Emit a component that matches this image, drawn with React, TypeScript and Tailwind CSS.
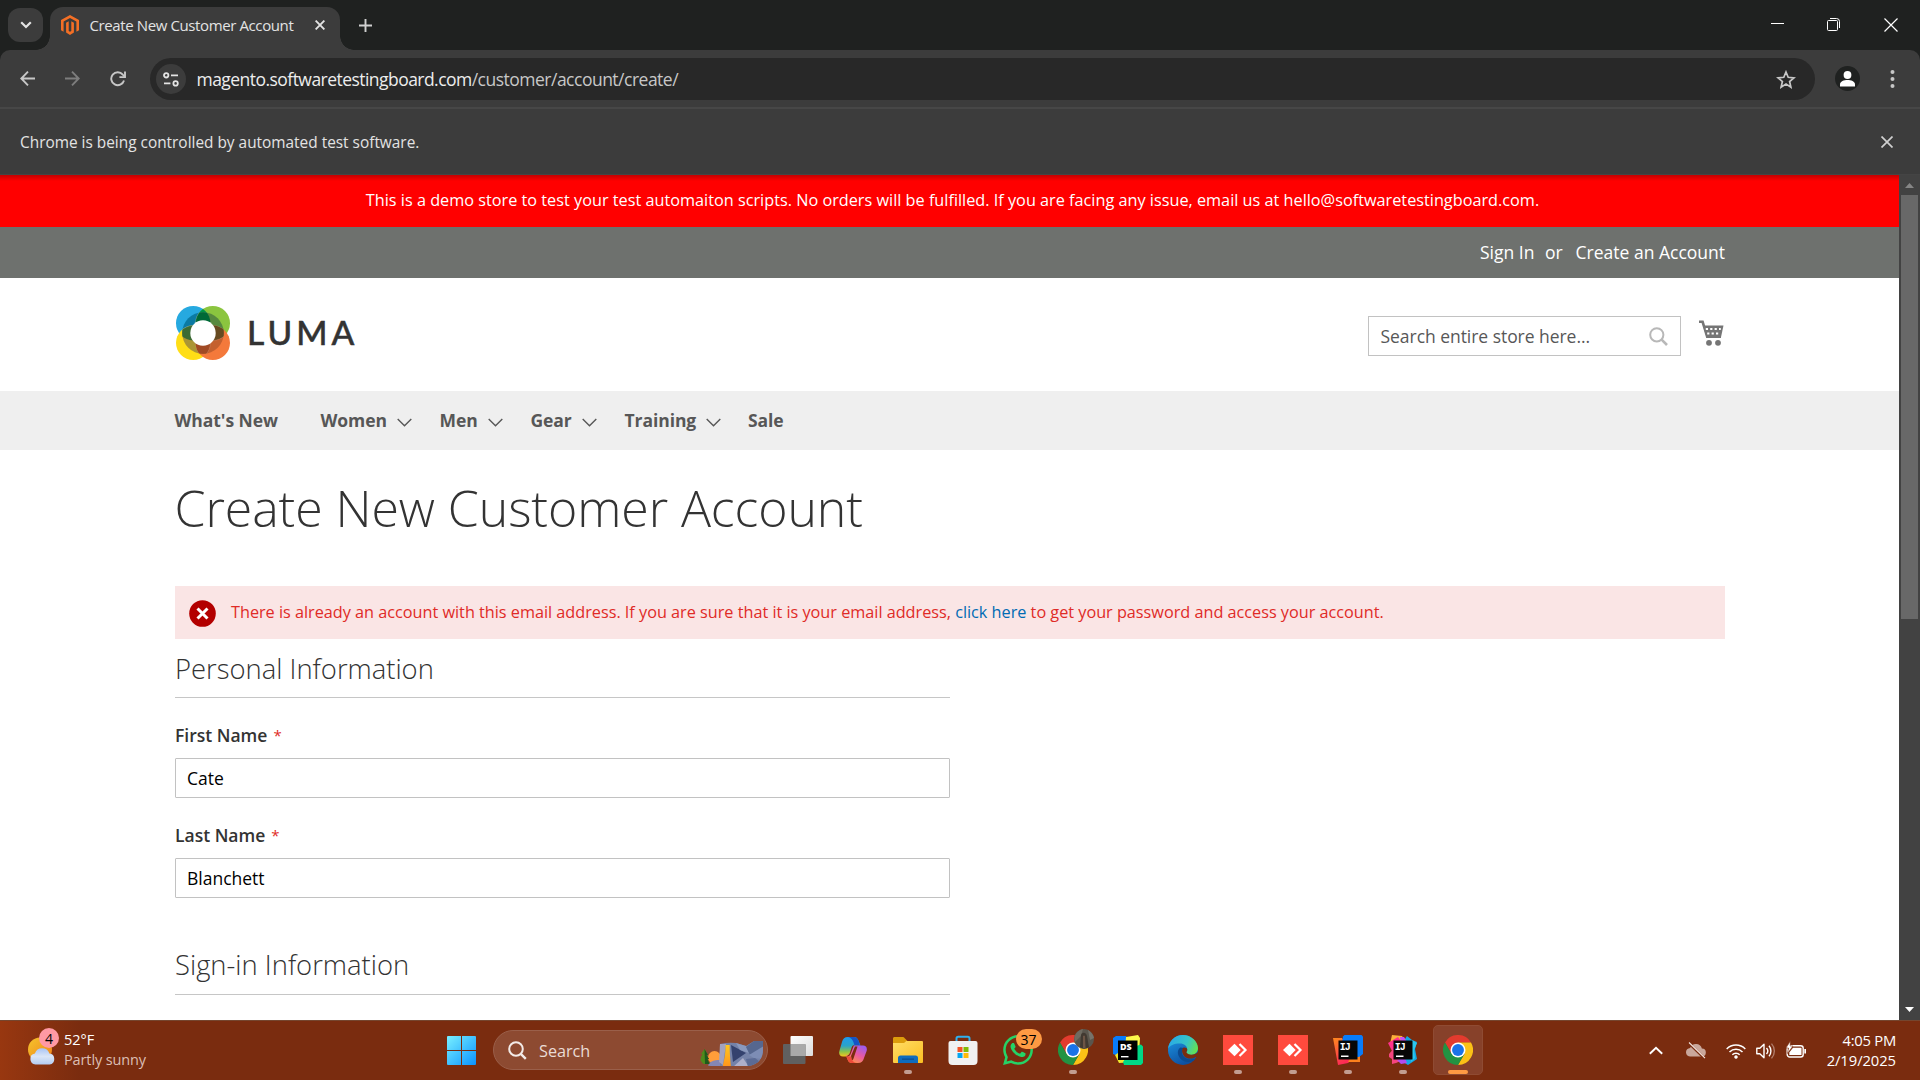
import React, { ReactNode } from "react";

/* ---------- Browser chrome ---------- */

function MagentoMark() {
  return (
    <svg width="18" height="20" viewBox="0 0 18 20" fill="#f46f25">
      <path d="M9 0 0 5.1v10.2l2.6 1.5V6.6L9 2.9l6.4 3.7v10.2l2.6-1.5V5.1z" />
      <path d="M10.3 15.9 9 16.7l-1.3-.8V6.3L5.1 7.8v9.8L9 20l3.9-2.4V7.8l-2.6-1.5z" />
    </svg>
  );
}

function TabStrip() {
  return (
    <div className="flex h-[50px] bg-[#1f2120]">
      <div className="ml-2 mt-2 flex h-[34px] w-[35px] items-center justify-center rounded-[12px] bg-[#3c3c3c]">
        <svg width="12" height="8" viewBox="0 0 12 8" fill="none" stroke="#e3e3e3" strokeWidth="2.2">
          <path d="M1.2 1.2 6 6l4.8-4.8" />
        </svg>
      </div>
      <div className="-ml-[7px] h-[14px] w-[14px] self-end bg-[radial-gradient(circle_at_0_0,transparent_13.5px,#3c3c3c_14px)]" />
      <div className="mt-[7px] flex h-[43px] w-[290px] items-center rounded-t-[13px] bg-[#3c3c3c] pb-[7px] pl-[11px]">
        <MagentoMark />
        <span className="ml-[10.5px] w-[215px] whitespace-nowrap text-[15px] tracking-[-0.39px] text-[#e3e3e3]">
          Create New Customer Account
        </span>
        <svg className="ml-[10.5px]" width="10" height="10" viewBox="0 0 10 10" stroke="#e3e3e3" strokeWidth="1.9">
          <path d="m.6.6 8.8 8.8M9.4.6.6 9.4" />
        </svg>
      </div>
      <div className="h-[14px] w-[14px] self-end bg-[radial-gradient(circle_at_100%_0,transparent_13.5px,#3c3c3c_14px)]" />
      <svg className="ml-[5px] mt-[19px]" width="13" height="13" viewBox="0 0 13 13" stroke="#d0d0d0" strokeWidth="1.9">
        <path d="M6.5 0v13M0 6.5h13" />
      </svg>
      <div className="ml-auto mr-[22px] flex gap-[43px] pt-[18px]">
        <svg width="13" height="13" viewBox="0 0 13 13" fill="#fff">
          <path d="M0 5h13v1H0z" />
        </svg>
        <svg width="14" height="14" viewBox="0 0 14 14" fill="none" stroke="#fff">
          <rect x=".5" y="2.5" width="10" height="10" rx="1" />
          <path d="M3 .5h6.5a3 3 0 0 1 3 3V10" />
        </svg>
        <svg width="14" height="14" viewBox="0 0 14 14" stroke="#fff" strokeWidth="1.2">
          <path d="m.5.5 13 13M13.5.5l-13 13" />
        </svg>
      </div>
    </div>
  );
}

function Toolbar() {
  return (
    <div className="bg-[#1f2120]">
      <div className="flex h-[57px] items-start rounded-t-[10px] bg-[#3c3c3c] pt-2">
        <div className="flex h-[42px] w-[150px] items-center">
          <svg className="ml-5 mt-[-1px]" width="15" height="15" viewBox="0 0 15 15" fill="none" stroke="#c7c7c7" strokeWidth="1.9">
            <path d="M15 7.5H1.5M8 .7 1.3 7.5 8 14.3" />
          </svg>
          <svg className="ml-[30px] mt-[-1px]" width="15" height="15" viewBox="0 0 15 15" fill="none" stroke="#7d7d7d" strokeWidth="1.9">
            <path d="M0 7.5h13.5M7 .7l6.7 6.8L7 14.3" />
          </svg>
          <svg className="ml-[29.5px] mt-[-1px]" width="16" height="16" viewBox="0 0 16 16" fill="none" stroke="#c7c7c7" strokeWidth="1.9">
            <path d="M14 9.5A6.5 6.5 0 1 1 12.8 3.6L15 5.8" />
            <path d="M15 .5v5.6H9.4" />
          </svg>
        </div>
        <div className="flex h-[42px] w-[1665px] items-center rounded-full bg-[#282828] pl-[6px] pr-[19.5px]">
          <div className="flex h-[30px] w-[30px] items-center justify-center rounded-full bg-[#3c3c3c]">
            <svg width="16" height="15" viewBox="0 0 16 15" fill="none" stroke="#e3e3e3" strokeWidth="1.8">
              <circle cx="3.2" cy="3.3" r="2.2" />
              <path d="M8 3.3h7M1 11.4h6.4" />
              <circle cx="12.6" cy="11.4" r="2.2" />
            </svg>
          </div>
          <div className="ml-[10.5px] whitespace-nowrap pt-px text-[17.5px] tracking-[-0.5px] text-[#c7c7c7]">
            <span className="tracking-[-0.54px] text-[#ededed]">magento.softwaretestingboard.com</span>/customer/account/create/
          </div>
          <svg className="ml-auto" width="20" height="19" viewBox="0 0 20 19" fill="none" stroke="#c7c7c7" strokeWidth="1.7">
            <path d="m10 2 2.2 5.3 5.7.5-4.3 3.7 1.3 5.6-4.9-3-4.9 3 1.3-5.6L2.1 7.8l5.7-.5z" />
          </svg>
        </div>
        <div className="ml-5 mt-2 flex h-[25px] w-[25px] items-center justify-center rounded-full bg-[#1f2120]">
          <svg width="15" height="16" viewBox="0 0 15 16" fill="#fff">
            <circle cx="7.5" cy="4" r="3.9" />
            <path d="M0 15.5v-2.2C0 10.5 4 9 7.5 9s7.5 1.5 7.5 4.3v2.2z" />
          </svg>
        </div>
        <svg className="ml-[30px] mt-[12px]" width="5" height="18" viewBox="0 0 5 18" fill="#c7c7c7">
          <circle cx="2.5" cy="2" r="2" />
          <circle cx="2.5" cy="9" r="2" />
          <circle cx="2.5" cy="16" r="2" />
        </svg>
      </div>
    </div>
  );
}

function InfoBar() {
  return (
    <div className="flex h-[68px] items-center justify-between border-b border-t-2 border-b-[#444] border-t-[#474747] bg-[#3c3c3c] pl-5 pr-[27px]">
      <span className="whitespace-nowrap pt-[2px] text-[15.4px] text-[#e3e3e3]">Chrome is being controlled by automated test software.</span>
      <svg width="12" height="12" viewBox="0 0 12 12" stroke="#d0d0d0" strokeWidth="1.7">
        <path d="m.5.5 11 11M11.5.5l-11 11" />
      </svg>
    </div>
  );
}

/* ---------- Store page ---------- */

function LumaLogo() {
  return (
    <svg width="54" height="54" viewBox="0 0 54 54">
      <defs>
        <clipPath id="tl"><circle cx="17.2" cy="17.2" r="17.2" /></clipPath>
        <clipPath id="br"><circle cx="36.8" cy="36.8" r="17.2" /></clipPath>
        <clipPath id="mid"><circle cx="27" cy="27" r="20.8" /></clipPath>
      </defs>
      <circle cx="17.2" cy="17.2" r="17.2" fill="#26a9e0" />
      <circle cx="36.8" cy="17.2" r="17.2" fill="#8bc53f" />
      <circle cx="17.2" cy="36.8" r="17.2" fill="#ffde16" />
      <circle cx="36.8" cy="36.8" r="17.2" fill="#f4793b" />
      <g clipPath="url(#tl)"><circle cx="36.8" cy="17.2" r="17.2" fill="#009345" /></g>
      <g clipPath="url(#mid)" stroke="#ffffff" strokeOpacity=".25" strokeWidth=".6">
        <circle cx="17.2" cy="17.2" r="17.2" fill="#0b7aa3" />
        <circle cx="36.8" cy="17.2" r="17.2" fill="#57893f" />
        <circle cx="17.2" cy="36.8" r="17.2" fill="#ab9535" />
        <circle cx="36.8" cy="36.8" r="17.2" fill="#c4602f" />
        <g clipPath="url(#tl)">
          <circle cx="36.8" cy="17.2" r="17.2" fill="#006937" />
          <circle cx="17.2" cy="36.8" r="17.2" fill="#3b6b33" />
        </g>
        <g clipPath="url(#br)">
          <circle cx="36.8" cy="17.2" r="17.2" fill="#664a20" />
          <circle cx="17.2" cy="36.8" r="17.2" fill="#a14a24" />
        </g>
      </g>
      <circle cx="27" cy="27" r="12.7" fill="#fff" />
    </svg>
  );
}

function CartIcon() {
  return (
    <svg width="26" height="27" viewBox="0 0 26 27">
      <path d="M1 1.8h3.6l4.6 15h13.6" fill="none" stroke="#757575" strokeWidth="2.6" />
      <path d="M5 5.5h20.500l-2.700 12.500H8.800z" fill="#757575" />
      <g stroke="#fff" strokeWidth="2" strokeDasharray="2.2 2.2">
        <path d="M7.8 9h15" />
        <path d="M9.2 13.500h13" />
      </g>
      <circle cx="11" cy="22.8" r="2.9" fill="#757575" />
      <circle cx="20" cy="22.8" r="2.9" fill="#757575" />
    </svg>
  );
}

function NavItem({ label, width, arrow }: { label: string; width: string; arrow?: boolean }) {
  return (
    <div className={`flex items-center ${width}`}>
      <span className="whitespace-nowrap tracking-[-0.07px]">{label}</span>
      {arrow && (
        <svg className="ml-[10px] mt-[3px]" width="15" height="9" viewBox="0 0 15 9" fill="none" stroke="#575757" strokeWidth="1.4">
          <path d="m.7.9 6.800 6.800L14.300.9" />
        </svg>
      )}
    </div>
  );
}

function Legend({ children }: { children: ReactNode }) {
  return <h2 className="h-[46px] border-b border-[#c6c6c6] text-[27.4px] font-light leading-[33px] text-[#333]">{children}</h2>;
}

function Field({ label, value }: { label: string; value: string }) {
  return (
    <div className="h-[100px]">
      <div className="flex h-[23px] items-center text-[17.5px] font-semibold text-[#333]">
        {label}
        <span className="ml-[6px] text-[15px] font-normal text-[#e02b27]">*</span>
      </div>
      <div className="mt-[11px] flex h-[40px] items-center rounded-[1px] border border-[#c2c2c2] bg-white px-[11px] text-[17.5px] text-black">
        {value}
      </div>
    </div>
  );
}

function StorePage() {
  return (
    <div className="h-[845px] w-[1899px] overflow-hidden bg-white">
      <div className="h-[52px] bg-[#ff0000] bg-[linear-gradient(#c40000,#ff0000_6px)] pl-[6px] text-center text-[16.25px] leading-[50px] text-white">
        This is a demo store to test your test automaiton scripts. No orders will be fulfilled. If you are facing any issue, email us at hello@softwaretestingboard.com.
      </div>
      <div className="flex h-[51px] items-center justify-end bg-[#6e716e] pr-[174px] text-[17.5px] text-white">
        <span>Sign In</span>
        <span className="ml-[10.5px]">or</span>
        <span className="ml-[13px]">Create an Account</span>
      </div>
      <div className="flex h-[113px] px-[175px]">
        <div className="ml-px mt-[28px]">
          <LumaLogo />
        </div>
        <div className="ml-[17px] mt-[27px] font-['Lato'] text-[33.5px] font-medium leading-[54px] tracking-[4px] text-[#333] [-webkit-text-stroke:0.5px_#333]">LUMA</div>
        <div className="ml-auto mt-[38px] flex h-[40px] w-[313px] items-center justify-between border border-[#c2c2c2] pl-[11.5px] pr-[12px] text-[17.5px] text-[#575757]">
          <span className="tracking-[-0.04px]">Search entire store here...</span>
          <svg width="19" height="19" viewBox="0 0 19 19" fill="none" stroke="#b8b8b8" strokeWidth="2">
            <circle cx="7.8" cy="7.8" r="6.6" />
            <path d="m12.6 12.6 5.4 5.4" strokeWidth="2.6" />
          </svg>
        </div>
        <div className="ml-[17px] mt-[42px]">
          <CartIcon />
        </div>
      </div>
      <div className="flex h-[59px] items-center bg-[#efefef] pl-[174.5px] text-[17.5px] font-bold text-[#575757]">
        <NavItem label="What's New" width="w-[146px]" />
        <NavItem label="Women" width="w-[119px]" arrow />
        <NavItem label="Men" width="w-[91px]" arrow />
        <NavItem label="Gear" width="w-[94px]" arrow />
        <NavItem label="Training" width="w-[123.5px]" arrow />
        <NavItem label="Sale" width="w-[60px]" />
      </div>
      <div className="px-[175px] pt-[31px]">
        <h1 className="-ml-[0.5px] text-[50px] font-light leading-[55px] tracking-[-0.09px] text-[#333]">Create New Customer Account</h1>
        <div className="mt-[50px] flex h-[53px] w-[1550px] items-center bg-[#fae5e5] pl-[14px] text-[16.25px] text-[#e02b27]">
          <svg width="27" height="27" viewBox="0 0 27 27" className="mt-[2px]">
            <circle cx="13.5" cy="13.5" r="13.3" fill="#b30000" />
            <path d="m8.5 8.5 10 10m0-10-10 10" stroke="#fff" strokeWidth="3" />
          </svg>
          <p className="ml-[15px] whitespace-nowrap tracking-[-0.015px]">
            There is already an account with this email address. If you are sure that it is your email address,{" "}
            <span className="text-[#006bb4]">click here</span> to get your password and access your account.
          </p>
        </div>
        <div className="w-[775px] pt-[13px]">
          <Legend>Personal Information</Legend>
          <div className="h-[242px] pt-[26px]">
            <Field label="First Name" value="Cate" />
            <Field label="Last Name" value="Blanchett" />
          </div>
          <div className="pt-[9px]">
            <Legend>
              <span className="block h-[45px] leading-[31px]">Sign-in Information</span>
            </Legend>
          </div>
        </div>
      </div>
    </div>
  );
}

function Scrollbar() {
  return (
    <div className="flex h-[845px] w-[21px] flex-col items-center bg-[#424242]">
      <svg className="mt-[8px]" width="9" height="5" viewBox="0 0 9 5" fill="#868686">
        <path d="M4.5 0 9 5H0z" />
      </svg>
      <div className="mt-[7px] h-[424px] w-[17px] bg-[#686868]" />
      <svg className="mb-[8px] mt-auto" width="9" height="5" viewBox="0 0 9 5" fill="#fff">
        <path d="M4.5 5 9 0H0z" />
      </svg>
    </div>
  );
}

/* ---------- Taskbar ---------- */

function Slot({ children, running }: { children: ReactNode; running?: boolean }) {
  return (
    <div className="flex h-[60px] w-[55px] flex-col items-center pt-[15px]">
      <div className="relative flex h-[30px] w-[30px] items-center justify-center">{children}</div>
      {running && <div className="mt-[5px] h-[4px] w-[8px] rounded-full bg-[#c39d90]" />}
    </div>
  );
}

function WeatherIcon() {
  return (
    <svg width="28" height="28" viewBox="0 0 28 28">
      <defs>
        <linearGradient id="sun" x1="0" y1="0" x2="1" y2="1">
          <stop offset="0" stopColor="#f5c52c" />
          <stop offset="1" stopColor="#f0801a" />
        </linearGradient>
        <linearGradient id="cloud" x1="0" y1="0" x2="0" y2="1">
          <stop offset="0" stopColor="#a9c4f5" />
          <stop offset=".5" stopColor="#dbe6f7" />
          <stop offset="1" stopColor="#b3cbf2" />
        </linearGradient>
      </defs>
      <circle cx="12" cy="12.5" r="12" fill="url(#sun)" />
      <path d="M7.500 27.500a5.500 5.500 0 0 1-.6-10.900 7.600 7.600 0 0 1 14.500 0 5.500 5.500 0 0 1 .2 10.900z" fill="url(#cloud)" />
    </svg>
  );
}

function WindowsIcon() {
  return (
    <svg width="29" height="29" viewBox="0 0 29 29">
      <defs>
        <linearGradient id="win" gradientUnits="userSpaceOnUse" x1="0" y1="0" x2="29" y2="29">
          <stop offset="0" stopColor="#79f0ff" />
          <stop offset="1" stopColor="#0a92ff" />
        </linearGradient>
      </defs>
      <path fill="url(#win)" d="M1 0h13v14H0V1a1 1 0 0 1 1-1zM15 0h13a1 1 0 0 1 1 1v13H15zM0 15h14v14H1a1 1 0 0 1-1-1zM15 15h14v13a1 1 0 0 1-1 1H15z" />
    </svg>
  );
}

function SearchArt() {
  return (
    <svg className="shrink-0" width="64" height="26" viewBox="0 0 64 26">
      <defs>
        <clipPath id="artclip"><path d="M0 0h63v8c0 10-5 16-15 17H11C4 25 0 21 0 16z" /></clipPath>
        <linearGradient id="fall" x1="0" y1="0" x2="0" y2="1">
          <stop offset="0" stopColor="#ffc71f" />
          <stop offset="1" stopColor="#ff941a" />
        </linearGradient>
      </defs>
      <g clipPath="url(#artclip)">
        <circle cx="14.500" cy="16.500" r="6.500" fill="#ff9d3a" />
        <path d="M8 26c0-5 5-7 12-7l4 8z" fill="#8587b3" />
        <path d="M4.500 8 8 14H6.500L9 18H7.500l2 5H0v-5h1.500L.5 17 2.500 13H1z" fill="#4f8a1b" />
        <path d="M4.500 8 8 14H6.500L9 18H7.500l2 5H5z" fill="#1f5a1c" />
        <path d="M20 3q8-2 16-1l10 3 8-5q6-2 10-1v27H20z" fill="#7482a8" />
        <path d="m20 3 6 0-3 21-4-3z" fill="#a3a3bf" />
        <path d="m31 4 15 8-13 9z" fill="#34426e" />
        <path d="m36 2 10 3 3 7-9-3z" fill="#8a99bd" />
        <path d="m54 0 10-2v8L50 14l-4-8z" fill="#56678f" />
        <path d="M64 5v13l-10-1-5-3z" fill="#7d8db5" />
        <path d="m33 26 10-9 6 9z" fill="#aeb0ca" />
        <path d="m46 18 9-1 5 4-12 5z" fill="#5b6b95" />
        <path d="M25.500 4h4.200c0 7 .3 12 1.300 22h-8.500c2-8 3-13 3-22z" fill="url(#fall)" />
      </g>
    </svg>
  );
}

function TaskViewIcon() {
  return (
    <svg width="30" height="28" viewBox="0 0 30 28">
      <defs>
        <linearGradient id="tvw" x1="0" y1="0" x2="1" y2="1">
          <stop offset="0" stopColor="#fff" />
          <stop offset="1" stopColor="#dcdcdc" />
        </linearGradient>
      </defs>
      <rect x="7.5" y="0" width="22.5" height="20" rx="1" fill="url(#tvw)" />
      <rect x="0" y="8" width="22.5" height="20" rx="1" fill="#606060" />
      <path d="M7.500 8h15v12h-15z" fill="#a9a9a9" />
    </svg>
  );
}

function CopilotIcon() {
  return (
    <svg width="28" height="26" viewBox="0 0 28 26">
      <defs>
        <linearGradient id="cpa" x1="0" y1="0" x2="0" y2="1">
          <stop offset="0" stopColor="#1d9bf0" />
          <stop offset=".45" stopColor="#2aa3c9" />
          <stop offset=".75" stopColor="#8bc34a" />
          <stop offset="1" stopColor="#f3c51d" />
        </linearGradient>
        <linearGradient id="cpb" x1=".8" y1="0" x2=".2" y2="1">
          <stop offset="0" stopColor="#9a5cf2" />
          <stop offset=".5" stopColor="#ea5aa0" />
          <stop offset="1" stopColor="#ff9a3c" />
        </linearGradient>
      </defs>
      <path d="M15 0c3 0 4 2 5 5l1.500 3.500H16c-2 0-3 1-3.600 3l-1.600 5c-.7 2-1.600 3-3.800 3H4c-3 0-4.500-2-3.600-5.500L3 5C4 1.700 5.500 0 9 0z" fill="url(#cpa)" />
      <path d="M9 0h6c3 0 4 2 5 5l1 3.500h-5.500c-1-3.500-2-7.500-6.500-8.500z" fill="#1654c6" />
      <path d="M13 26c-3 0-4-2-5-5l-1-3.500C9 19 10 18 10.800 16l1.600-4.500c.7-2 1.600-3 3.600-3h8c3 0 4.500 2 3.600 5.500L25 21c-1 3.300-2.500 5-6 5z" fill="url(#cpb)" />
      <path d="M13 26c-3 0-4-2-5-5l-1-1.500h5c1 3 1.500 6 6 6.500z" fill="#f04a3a" />
      <path d="M16 9.500h2.500l-4 12c-.3 1-1 1.500-1.500 1.500l-1-4z" fill="#7a2c0f" />
      <path d="m10.500 17-3 2.500c2 .3 3.500-.5 4.500-3.500l3-8c-1.500.3-2 1.500-2.600 3.500z" fill="#7a2c0f" />
    </svg>
  );
}

function FolderIcon() {
  return (
    <svg width="30" height="27" viewBox="0 0 30 27">
      <defs>
        <linearGradient id="fold" x1="0" y1="0" x2="1" y2="1">
          <stop offset="0" stopColor="#ffdd66" />
          <stop offset="1" stopColor="#fbbe22" />
        </linearGradient>
      </defs>
      <path d="M0 1.500C0 .6.600 0 1.500 0h8c1 0 1.500.4 2 1l3 3H28v10H0z" fill="#dc9c0c" />
      <path d="M0 6h10c1 0 1.600-.4 2.200-1l1-1H29a1 1 0 0 1 1 1v20a1 1 0 0 1-1 1H1a1 1 0 0 1-1-1z" fill="url(#fold)" />
      <path d="M5 26v-5a2.500 2.500 0 0 1 2.500-2.500h15A2.500 2.500 0 0 1 25 21v5z" fill="#0f6cbd" />
      <path d="M9 21.500h12v1.300H9z" fill="#0b4d90" />
    </svg>
  );
}

function StoreIcon() {
  return (
    <svg width="30" height="30" viewBox="0 0 30 30">
      <path d="M8.500 8V3.500c0-1 .7-1.700 1.700-1.700h9.600c1 0 1.700.7 1.700 1.700V8" fill="none" stroke="#2fb0ee" strokeWidth="2" />
      <path d="M.5 8a2 2 0 0 1 2-2h25a2 2 0 0 1 2 2v18a4 4 0 0 1-4 4h-21a4 4 0 0 1-4-4z" fill="#f1f1f1" />
      <path d="M9.500 12h5v5h-5z" fill="#f35325" />
      <path d="M15.500 12h5v5h-5z" fill="#81bc06" />
      <path d="M9.500 18h5v5h-5z" fill="#05a6f0" />
      <path d="M15.500 18h5v5h-5z" fill="#ffba08" />
    </svg>
  );
}

function WhatsAppIcon() {
  return (
    <svg width="30" height="30" viewBox="0 0 24 24" fill="#25d366">
      <path d="M17.472 14.382c-.297-.149-1.758-.867-2.030-.967-.273-.099-.471-.148-.670.150-.197.297-.767.966-.940 1.164-.173.199-.347.223-.644.075-.297-.150-1.255-.463-2.390-1.475-.883-.788-1.480-1.761-1.653-2.059-.173-.297-.018-.458.130-.606.134-.133.298-.347.446-.520.149-.174.198-.298.298-.497.099-.198.050-.371-.025-.520-.075-.149-.669-1.612-.916-2.207-.242-.579-.487-.500-.669-.510-.173-.008-.371-.010-.570-.010-.198 0-.520.074-.792.372-.272.297-1.040 1.016-1.040 2.479 0 1.462 1.065 2.875 1.213 3.074.149.198 2.096 3.200 5.077 4.487.709.306 1.262.489 1.694.625.712.227 1.360.195 1.871.118.571-.085 1.758-.719 2.006-1.413.248-.694.248-1.289.173-1.413-.074-.124-.272-.198-.570-.347M12.050 21.785h-.004a9.870 9.870 0 01-5.031-1.378l-.361-.214-3.741.982.998-3.648-.235-.374a9.860 9.860 0 01-1.510-5.260c.001-5.450 4.436-9.884 9.888-9.884 2.640 0 5.122 1.030 6.988 2.898a9.825 9.825 0 012.893 6.994c-.003 5.450-4.437 9.884-9.885 9.884m8.413-18.297A11.815 11.815 0 0012.050 0C5.495 0 .160 5.335.157 11.892c0 2.096.547 4.142 1.588 5.945L.057 24l6.305-1.654a11.882 11.882 0 005.683 1.448h.005c6.554 0 11.890-5.335 11.893-11.893a11.821 11.821 0 00-3.480-8.413z" />
    </svg>
  );
}

function ChromeIcon() {
  return (
    <svg width="30" height="30" viewBox="0 0 48 48">
      <path d="M24 12h20.800A24 24 0 0 0 3.200 12l10.400 18z" fill="#e33b2e" />
      <path d="M34.400 30 24 48a24 24 0 0 0 20.800-36H24z" fill="#fbc116" />
      <path d="M13.600 30 3.200 12A24 24 0 0 0 24 48l10.400-18z" fill="#229342" />
      <circle cx="24" cy="24" r="12" fill="#fff" />
      <circle cx="24" cy="24" r="9.5" fill="#1a73e8" />
    </svg>
  );
}

function DataSpellIcon() {
  return (
    <svg width="30" height="30" viewBox="0 0 30 30">
      <path d="M0 3 3 1h10l4 6L5 21 0 19z" fill="#087cfa" />
      <path d="M13 2 25 0l2 3-1 15H12z" fill="#fcf84a" />
      <path d="M2 20 14 12l6 15-14 1z" fill="#f0e92c" />
      <path d="M20 12 28 9.500l2 2V28l-2 2H11l-1-3z" fill="#00d886" />
      <path d="M5 5.500h19.500V25H5z" fill="#000" />
      <path d="M8 21h7.500v1.400H8z" fill="#fff" />
      <text x="7" y="14.5" fontFamily="Open Sans" fontWeight="800" fontSize="9" fill="#fff">DS</text>
    </svg>
  );
}

function EdgeIcon() {
  return (
    <svg width="30" height="30" viewBox="0 0 30 30">
      <defs>
        <linearGradient id="edt" x1="0" y1=".3" x2="1" y2=".6">
          <stop offset="0" stopColor="#2aa9e8" />
          <stop offset=".6" stopColor="#36c5c5" />
          <stop offset="1" stopColor="#66e04f" />
        </linearGradient>
        <linearGradient id="edb" x1="0" y1="0" x2=".5" y2="1">
          <stop offset="0" stopColor="#1d9be8" />
          <stop offset="1" stopColor="#0e4fa0" />
        </linearGradient>
      </defs>
      <circle cx="15" cy="15" r="15" fill="url(#edb)" />
      <path d="M0 14C1 6 7 0 15 0s15 6.500 15 13c0 4-3 7-7 7-3 0-5-1-5-2.200 0-.8 1.200-1.300 1.200-3.300C19.200 11 16 8.500 12 8.500 6 8.500 1.500 10.500 0 14z" fill="url(#edt)" />
      <path d="M12.500 12.500c-2.500 1.500-3 4-2.500 6.500 1 5 6 8 10 8 3 0 5.500-1 7-2.500-.5-.8-2-.2-4 0-5 .3-9.500-4-9-8 .1-2 1-3 1.500-3.500z" fill="#0c4a90" />
      <path d="M15 13c-1.500 1.500-1.200 5.500 1.500 8.500 3 2.800 8 2.500 11 .5l2.500 0v-5c-3 3-9 4-11.500.5-.5-1 1.200-1.300.7-3.300 0-1.200-3-2.200-4.200-1.200z" fill="#7a2c0f" />
    </svg>
  );
}

function AnyDeskIcon() {
  return (
    <svg width="30" height="30" viewBox="0 0 30 30">
      <path d="M0 0h30v30H0z" fill="#ff4a3d" />
      <path d="m11.500 8.700 6.200 6.300-6.200 6.300L5 15z" fill="#fff" />
      <path d="m16.500 9 6 6-6 6" fill="none" stroke="#fff" strokeWidth="2.2" />
    </svg>
  );
}

function IdeaIcon({ ultimate }: { ultimate?: boolean }) {
  return (
    <svg width="30" height="30" viewBox="0 0 30 30">
      <defs>
        <linearGradient id="ijo" x1="0" y1="0" x2=".4" y2="1">
          <stop offset="0" stopColor="#ff8a1e" />
          <stop offset="1" stopColor="#fe2857" />
        </linearGradient>
      </defs>
      {ultimate ? (
        <g>
          <path d="M4 0 14 1l4 6L5 14 2 9z" fill="#fcb03a" />
          <path d="m0 8 10-6 6 8-12 6z" fill="#ff318c" />
          <path d="m1 19 6-7 8 13-7 3 -4 1 0-5-3-2z" fill="#f6457f" />
          <path d="m15 7 4-6 5 4 5 2-2 7 2 10-9 6-8-5z" fill="#12a8e6" />
          <path d="m24 5 5 3-3 7 1 8-4 4z" fill="#2bc7ee" />
          <path d="m9 25 8-2 2 5-6 1z" fill="#b14df0" />
          <path d="m12 2 4 0 3 5-6 2z" fill="#c94ff0" />
        </g>
      ) : (
        <g>
          <path d="M0 3 9 3l12 20-6 5-10 2z" fill="url(#ijo)" />
          <path d="M15 27h12v-8l-6-3z" fill="#fc801d" />
          <path d="M10 1.500 11.500 0H28.500L30 1.500V19l-4 3H14L9 8z" fill="#087cfa" />
        </g>
      )}
      <path d="M5.500 5.500h19v19h-19z" fill="#070707" />
      <path d="M8 20.500h7.500v1.500H8z" fill="#fff" />
      <text x="6.8" y="15" fontFamily="Liberation Mono" fontWeight="700" fontSize="10" letterSpacing="-1" fill="#fff">IJ</text>
    </svg>
  );
}

function Tray() {
  return (
    <div className="ml-auto flex h-full items-center pr-[24px]">
      <svg width="14" height="9" viewBox="0 0 14 9" fill="none" stroke="#fff" strokeWidth="1.9">
        <path d="m.8 7.800 6.200-6 6.200 6" />
      </svg>
      <svg className="ml-[23px]" width="20" height="17" viewBox="0 0 20 17">
        <path d="M4.500 14.500a4.300 4.300 0 0 1-.4-8.600 6.300 6.300 0 0 1 11.800.6 4 4 0 0 1-.1 8z" fill="#c9a79b" />
        <path d="m2.500.8 16 15.700" stroke="#7a2c0f" strokeWidth="2.4" />
        <path d="m3 .5 16 15.700" stroke="#f4e7e2" strokeWidth="1.1" />
      </svg>
      <svg className="ml-[20px]" width="20" height="16" viewBox="0 0 20 16" fill="none" stroke="#fff" strokeWidth="1.5">
        <path d="M.7 6A13 13 0 0 1 19.300 6M3.500 9a9.200 9.200 0 0 1 13 0M6.300 11.800a5.300 5.300 0 0 1 7.400 0" />
        <circle cx="10" cy="14" r="1.5" fill="#fff" strokeWidth=".5" />
      </svg>
      <svg className="ml-[10px]" width="20" height="18" viewBox="0 0 20 18" fill="none" stroke="#fff" strokeWidth="1.4">
        <path d="M.8 6.200h3L8 2.200v13.600l-4.200-4h-3z" strokeLinejoin="round" />
        <path d="M10.500 6a4.500 4.500 0 0 1 0 6M13 3.800a8 8 0 0 1 0 10.400" />
        <path d="M15.500 1.600a11 11 0 0 1 0 14.800" stroke="#b07c6a" />
      </svg>
      <svg className="-mt-[2px] ml-[10px]" width="20" height="17" viewBox="0 0 20 17">
        <rect x="1.2" y="4.700" width="16" height="11.300" rx="2.5" fill="none" stroke="#fff" strokeWidth="1.4" />
        <path d="M7 6.700h8.500V14H3.300v-2.500z" fill="#fff" />
        <path d="M18.300 8H20v4.500h-1.700z" fill="#fff" />
        <path d="M4.300 0 0 7h2.500L1.500 12.500 7 5H4.200z" fill="#fff" stroke="#7a2c0f" strokeWidth=".6" />
      </svg>
      <div className="-mt-[2px] ml-[20px] flex w-[70px] flex-col items-end whitespace-nowrap text-[14.8px] leading-5 text-white">
        <div className="tracking-[-0.25px]">4:05 PM</div>
        <div className="tracking-[-0.08px]">2/19/2025</div>
      </div>
    </div>
  );
}

function Taskbar() {
  return (
    <div className="flex h-[60px] border-t border-[#75462f] bg-[#7a2c0f] bg-[linear-gradient(90deg,#983710,#7a2c0f_80px)] font-['Open_Sans']">
      <div className="-mt-px flex w-[434px] pl-[28px]">
        <div className="relative pt-[17px]">
          <WeatherIcon />
          <div className="absolute left-[11px] top-[8px] flex h-5 w-5 items-center justify-center rounded-full bg-[#ff99a4] text-[14px] text-black">
            4
          </div>
        </div>
        <div className="ml-[8px] whitespace-nowrap pt-[10px] text-[14.5px] leading-5">
          <div className="text-white">52°F</div>
          <div className="tracking-[-0.12px] text-[#dcbfb4]">Partly sunny</div>
        </div>
      </div>
      <div className="-mt-px flex">
        <div className="flex h-[60px] w-[55px] items-center justify-center pt-px">
          <WindowsIcon />
        </div>
        <div className="ml-[4px] mr-[2px] mt-[10px] flex h-[40px] w-[275px] items-center rounded-full border border-[#9a5f4a] bg-[#8d4a31] pl-[14px]">
          <svg width="19" height="19" viewBox="0 0 19 19" fill="none" stroke="#f3ebe8" strokeWidth="2">
            <circle cx="8" cy="8" r="6.8" />
            <path d="m12.8 12.8 5 5" strokeWidth="2.4" />
          </svg>
          <span className="ml-[12px] w-[161px] shrink-0 pt-[2px] text-[16.2px] text-[#eadcd6]">Search</span>
          <div className="mt-[8px]">
            <SearchArt />
          </div>
        </div>
        <Slot><TaskViewIcon /></Slot>
        <Slot><CopilotIcon /></Slot>
        <Slot running><FolderIcon /></Slot>
        <Slot><StoreIcon /></Slot>
        <Slot>
          <WhatsAppIcon />
          <div className="absolute left-[13px] top-[-6px] flex h-5 w-[26px] items-center justify-center rounded-full bg-[#fe9a43] text-[14px] text-black">
            37
          </div>
        </Slot>
        <Slot running>
          <ChromeIcon />
          <svg className="absolute left-[16px] top-[-6px]" width="20" height="20" viewBox="0 0 20 20">
            <circle cx="10" cy="10" r="10" fill="#5a564d" />
            <path d="M2 4.500Q5 .5 9 0L7 7l-6 6Q-.5 8 2 4.500z" fill="#6f6b61" />
            <path d="M14 1q5 3 6 8l-4 2z" fill="#77736a" />
            <path d="M7 6c1-3 5-3 6 1l2 11q-5 3-9 0z" fill="#413931" />
            <path d="M9 7q1-1 2 0l.5 12H9z" fill="#6d5545" />
          </svg>
        </Slot>
        <Slot><DataSpellIcon /></Slot>
        <Slot><EdgeIcon /></Slot>
        <Slot running><AnyDeskIcon /></Slot>
        <Slot running><AnyDeskIcon /></Slot>
        <Slot running><IdeaIcon /></Slot>
        <Slot running><IdeaIcon ultimate /></Slot>
        <div className="ml-[3px] mt-[5px] flex h-[50px] w-[50px] flex-col items-center rounded-[5px] border border-[#8f4b33] bg-[#87412a] pt-[9px]">
          <ChromeIcon />
          <div className="mt-[5px] h-[4px] w-[20px] shrink-0 rounded-full bg-[#fe9a43]" />
        </div>
      </div>
      <Tray />
    </div>
  );
}

export default function App() {
  return (
    <div className="h-[1080px] w-[1920px] overflow-hidden font-['Open_Sans',sans-serif]">
      <TabStrip />
      <Toolbar />
      <InfoBar />
      <div className="flex">
        <StorePage />
        <Scrollbar />
      </div>
      <Taskbar />
    </div>
  );
}
